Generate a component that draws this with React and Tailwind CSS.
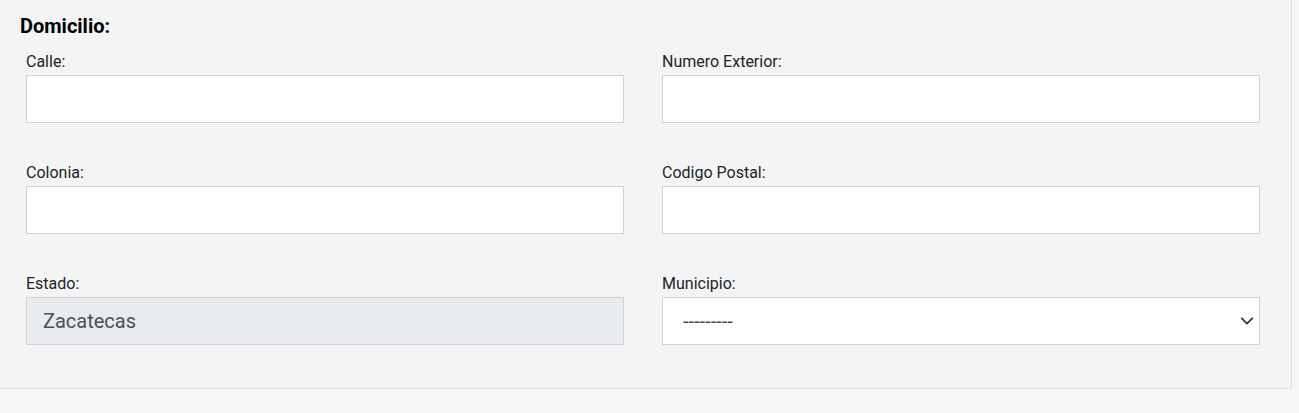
const inputCls =
  "block w-full h-[48px] border border-[#ced4da] bg-white px-4 text-[20px] text-[#495057] outline-none";

const Field = ({ label, children }) => (
  <div className="flex flex-col">
    <label className="text-[16px] leading-[20px] text-[#212529] mb-[3px]">{label}</label>
    {children}
  </div>
);

const App = () => {
  return (
    <div className="min-h-[413px] w-[1299px] bg-[#f6f6f6]" style={{ fontFamily: 'Roboto, "Liberation Sans", sans-serif' }}>
      <div className="w-[1292px] bg-[#f4f4f4] border-r border-b border-[#dedede] rounded-br-[4px] pl-[26px] pr-[31px] pt-[11px] pb-[43px]">
        <h3 className="-ml-[6px] text-[20px] leading-[30px] font-bold text-black mb-[11px]">Domicilio:</h3>
        <div className="grid grid-cols-2 gap-x-[38px] gap-y-[40px]">
          <Field label="Calle:">
            <input type="text" className={inputCls} />
          </Field>
          <Field label="Numero Exterior:">
            <input type="text" className={inputCls} />
          </Field>
          <Field label="Colonia:">
            <input type="text" className={inputCls} />
          </Field>
          <Field label="Codigo Postal:">
            <input type="text" className={inputCls} />
          </Field>
          <Field label="Estado:">
            <input type="text" disabled value="Zacatecas" className={`${inputCls} !bg-[#e9ecef]`} readOnly />
          </Field>
          <Field label="Municipio:">
            <div className="relative">
              <select className={`${inputCls} appearance-none pl-[20px] pr-10`} defaultValue="">
                <option value="">---------</option>
              </select>
              <svg
                width="14"
                height="14"
                viewBox="0 0 16 16"
                className="absolute right-[6px] top-1/2 -translate-y-1/2 pointer-events-none"
              >
                <path d="m2 5 6 6 6-6" fill="none" stroke="#343a40" strokeWidth="2.2" strokeLinecap="round" strokeLinejoin="round" />
              </svg>
            </div>
          </Field>
        </div>
      </div>
    </div>
  );
};

export default App;
